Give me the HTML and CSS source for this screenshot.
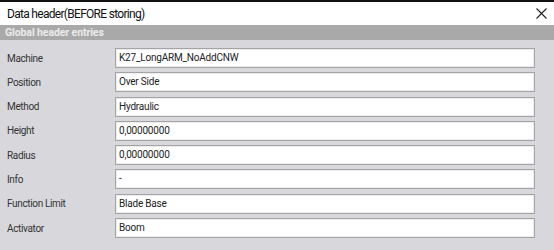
FILE: index.html
```html
<!DOCTYPE html>
<html lang="en">
<head>
    <meta charset="UTF-8">
    <title>Data header(BEFORE storing)</title>
    <link rel="stylesheet" href="styles.css">
</head>
<body>
    <div class="dialog">
        <div class="title-bar">
            <span class="title">Data header(BEFORE storing)</span>
            <span class="close">
                <svg width="11" height="11" viewBox="0 0 11 11">
                    <path d="M0.5 0.5 L10.5 10.5 M10.5 0.5 L0.5 10.5" stroke="#222" stroke-width="1.1" fill="none"/>
                </svg>
            </span>
        </div>
        <div class="section-header">Global header entries</div>
        <div class="entries">
            <div class="row"><label>Machine</label><div class="field">K27_LongARM_NoAddCNW</div></div>
            <div class="row"><label>Position</label><div class="field">Over Side</div></div>
            <div class="row"><label>Method</label><div class="field">Hydraulic</div></div>
            <div class="row"><label>Height</label><div class="field">0,00000000</div></div>
            <div class="row"><label>Radius</label><div class="field">0,00000000</div></div>
            <div class="row"><label>Info</label><div class="field">-</div></div>
            <div class="row"><label>Function Limit</label><div class="field">Blade Base</div></div>
            <div class="row"><label>Activator</label><div class="field">Boom</div></div>
        </div>
    </div>
</body>
</html>
```

FILE: styles.css
```css
body {
    margin: 0;
    font-family: Roboto, "Liberation Sans", Arial, sans-serif;
    background-color: #d8d8dc;
}
.dialog {
    width: 554px;
    height: 250px;
    border-top: 2px solid #111;
    box-sizing: border-box;
    background-color: #d8d8dc;
}
.title-bar {
    height: 23px;
    background: #fff;
    display: flex;
    align-items: center;
    justify-content: space-between;
    padding: 0 6px 0 7px;
}
.title {
    font-size: 12px;
    letter-spacing: -0.7px;
    color: #111;
}
.close {
    display: flex;
    margin-right: 1px;
}
.section-header {
    height: 15px;
    line-height: 15px;
    background-color: #a9a9a9;
    color: #ececec;
    font-size: 10.5px;
    font-weight: bold;
    letter-spacing: -0.1px;
    padding-left: 5px;
}
.entries {
    padding: 8px 19px 0 7px;
    display: flex;
    flex-direction: column;
    gap: 4.3px;
}
.row {
    display: flex;
    align-items: center;
    height: 20px;
}
.row label {
    width: 108px;
    font-size: 10px;
    letter-spacing: -0.35px;
    color: #333;
}
.field {
    flex: 1;
    height: 20px;
    box-sizing: border-box;
    background: #fff;
    border: 1px solid #a4a4a6;
    box-shadow: inset 0 0 0 1px #ececee;
    font-size: 10px;
    letter-spacing: -0.2px;
    color: #222;
    line-height: 18px;
    padding-left: 3px;
}
```
